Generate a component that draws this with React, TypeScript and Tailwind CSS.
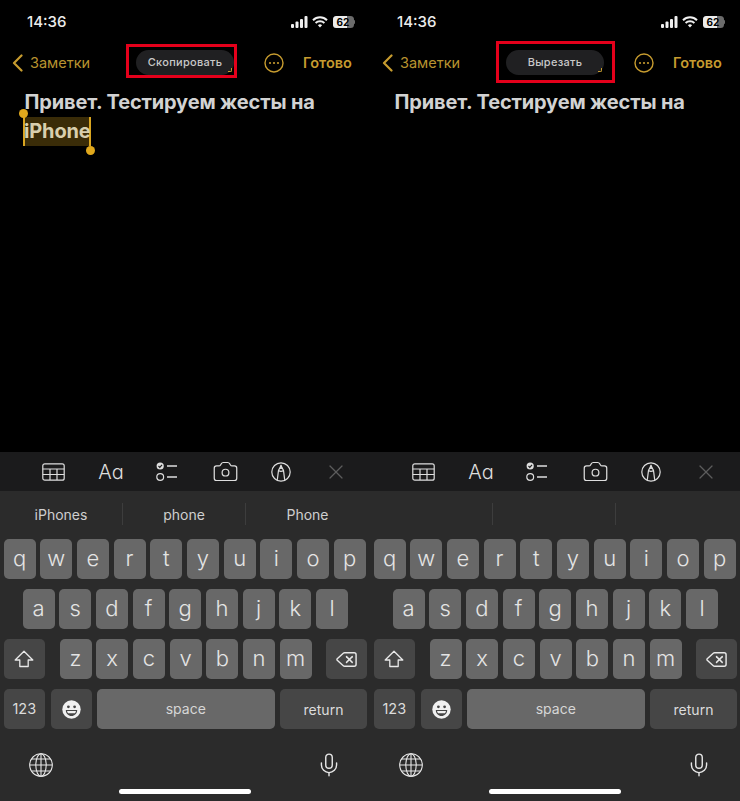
import { Camera, Delete, Mic, X } from 'lucide-react'

const font = "font-['Inter','Liberation_Sans',sans-serif]"
const gold = '#c79c2f'

function Key({ label, className = 'w-[32px]' }: { label: string; className?: string }) {
  return (
    <div className={`h-[40px] rounded-[5px] bg-[#686868] flex items-center justify-center text-[22px] leading-none font-light text-[#e4e4e4] pb-[2px] ${className}`}>
      {label}
    </div>
  )
}

function DarkKey({ children, className }: { children: React.ReactNode; className: string }) {
  return <div className={`h-[40px] rounded-[5px] bg-[#464646] flex items-center justify-center text-[#dcdcdc] ${className}`}>{children}</div>
}

function StatusIcons() {
  return (
    <div className="flex items-center gap-[4px]">
      <svg width="17" height="12" viewBox="0 0 17 12" fill="#f0f0f0">
        <rect x="0" y="8" width="3" height="4" rx="1" />
        <rect x="4.5" y="5.5" width="3" height="6.5" rx="1" />
        <rect x="9" y="3" width="3" height="9" rx="1" />
        <rect x="13.5" y="0" width="3" height="12" rx="1" />
      </svg>
      <svg width="16" height="12" viewBox="0 0 16 12" fill="none" stroke="#f0f0f0" strokeWidth="2">
        <path d="M1 4.2a10 10 0 0 1 14 0" />
        <path d="M3.6 6.9a6.4 6.4 0 0 1 8.8 0" />
        <path d="M8 11.5 5.9 9.3a3 3 0 0 1 4.2 0Z" fill="#f0f0f0" stroke="none" />
      </svg>
      <div className="flex items-center ml-[1px]">
        <div className="relative w-[21px] h-[12px] rounded-[3.5px] bg-[#6b6b6b] overflow-hidden">
          <div className="h-full w-[14px] bg-[#ececec]" />
          <span className="absolute inset-0 flex items-center justify-center text-[10px] font-bold text-black leading-none">62</span>
        </div>
        <div className="w-[1.5px] h-[4px] bg-[#6b6b6b] rounded-r" />
      </div>
    </div>
  )
}

function NavBar({ action, box }: { action: string; box: string }) {
  return (
    <div className="relative h-[38px] flex items-center shrink-0">
      <svg className="ml-[12px]" width="11" height="18" viewBox="0 0 11 18" fill="none" stroke={gold} strokeWidth="2.2" strokeLinecap="round" strokeLinejoin="round">
        <path d="M9.5 1.5 2 9l7.5 7.5" />
      </svg>
      <span className="ml-[7px] text-[14.5px] text-[#b8932f] w-[59px] whitespace-nowrap">Заметки</span>
      <div className="relative ml-[47px] mb-[2px] w-[98px] h-[25px] rounded-full bg-[#202022] flex items-center justify-center text-[11px] font-medium tracking-[0.3px] text-[#c9c9c9]">
        {action}
        <div className="absolute right-[2px] bottom-[3px] w-[4px] h-[4px] border-r border-b border-[#c79c2f] rounded-br-[2px]" />
      </div>
      <svg className="ml-[30px]" width="20" height="20" viewBox="0 0 20 20" fill="none" stroke={gold} strokeWidth="1.4">
        <circle cx="10" cy="10" r="9" />
        <circle cx="6" cy="10" r="1.1" fill={gold} stroke="none" />
        <circle cx="10" cy="10" r="1.1" fill={gold} stroke="none" />
        <circle cx="14" cy="10" r="1.1" fill={gold} stroke="none" />
      </svg>
      <span className="ml-[19px] text-[14.5px] font-semibold text-[#c79c2f]">Готово</span>
      <div className={`absolute border-[3px] border-[#e4001b] ${box}`} />
    </div>
  )
}

function Toolbar() {
  const cell = 'flex items-center justify-center'
  return (
    <div className="h-[39px] bg-[#1b1b1c] flex items-center pl-[25px] shrink-0 text-[#dedede]">
      <div className={`${cell} w-[57px]`}>
        <svg width="23" height="18" viewBox="0 0 23 18" fill="none" stroke="#dedede" strokeWidth="1.2">
          <rect x="0.8" y="0.8" width="21.4" height="16.4" rx="2" />
          <path d="M.8 6h21.4M.8 11.5h21.4M8 6v11M15 6v11" />
        </svg>
      </div>
      <div className={`${cell} w-[58px] text-[20px] leading-none font-light [font-feature-settings:'cv11']`}>Aa</div>
      <div className={`${cell} w-[54px]`}>
        <svg width="22" height="19" viewBox="0 0 22 19" fill="none" stroke="#dedede" strokeWidth="1.2">
          <circle cx="4.2" cy="4" r="3.6" fill="#dedede" stroke="none" />
          <path d="m2.5 4 1.3 1.3L6 2.8" stroke="#1b1b1c" />
          <circle cx="4.2" cy="15" r="3.4" />
          <path d="M11 4h10M11 15h10" strokeWidth="1.4" />
        </svg>
      </div>
      <div className={`${cell} w-[62px]`}>
        <Camera size={27} strokeWidth={1.1} />
      </div>
      <div className={`${cell} w-[50px]`}>
        <svg width="20" height="20" viewBox="0 0 20 20" fill="none" stroke="#dedede" strokeWidth="1.2">
          <circle cx="10" cy="10" r="9.2" />
          <path d="M6.3 17.8 7.5 8.5 10 3.5l2.5 5 1.2 9.3" />
          <path d="M7.5 8.5c1.5 1 3.5 1 5 0" />
          <path d="M10 3.5v3.5" strokeWidth="1.8" />
        </svg>
      </div>
      <div className={`${cell} w-[60px]`}>
        <X size={24} strokeWidth={1.2} className="text-[#5c5c5c]" />
      </div>
    </div>
  )
}

function Keyboard({ suggestions }: { suggestions: string[] }) {
  return (
    <div className="h-[310px] shrink-0 bg-[#2b2b2b] flex flex-col relative">
      <div className="h-[48px] flex items-center shrink-0 pb-[2px]">
        {suggestions.map((s, i) => (
          <div key={i} className={`w-[123px] h-[22px] flex items-center justify-center text-[14px] text-[#cfcfcf] ${i < 2 ? 'border-r border-[#3d3d3d]' : ''}`}>
            {s}
          </div>
        ))}
      </div>
      <div className="flex flex-col gap-[10px]">
        <div className="flex gap-[4.7px] pl-[3.5px]">
          {'qwertyuiop'.split('').map(k => <Key key={k} label={k} />)}
        </div>
        <div className="flex gap-[4.7px] pl-[22.5px]">
          {'asdfghjkl'.split('').map(k => <Key key={k} label={k} />)}
        </div>
        <div className="flex pl-[3.5px]">
          <DarkKey className="w-[41px]">
            <svg width="20" height="18" viewBox="0 0 20 18" fill="none" stroke="#e8e8e8" strokeWidth="1.3" strokeLinejoin="round">
              <path d="M10 1.2 1.2 10h4.6v6.5h8.4V10h4.6Z" />
            </svg>
          </DarkKey>
          <div className="flex gap-[4.7px] ml-[15px]">
            {'zxcvbnm'.split('').map(k => <Key key={k} label={k} />)}
          </div>
          <DarkKey className="w-[41px] ml-[14.5px]">
            <Delete size={23} strokeWidth={1.5} className="text-[#e8e8e8]" />
          </DarkKey>
        </div>
        <div className="flex gap-[5.5px] pl-[3.5px]">
          <DarkKey className="w-[41.5px] text-[14.5px]">123</DarkKey>
          <DarkKey className="w-[41px]">
            <svg width="19" height="19" viewBox="0 0 19 19">
              <circle cx="9.5" cy="9.5" r="9.2" fill="#f0f0f0" />
              <circle cx="6.4" cy="6.8" r="1.4" fill="#464646" />
              <circle cx="12.6" cy="6.8" r="1.4" fill="#464646" />
              <path d="M3.8 10h11.4c0 3.6-2.6 6-5.7 6s-5.7-2.4-5.7-6Z" fill="#464646" />
              <path d="M5 11h9c-.2 1-.5 1.6-1 2.2H6c-.5-.6-.8-1.2-1-2.2Z" fill="#f0f0f0" />
            </svg>
          </DarkKey>
          <div className="w-[177.5px] h-[40px] rounded-[5px] bg-[#686868] flex items-center justify-center text-[14px] text-[#d6d6d6] pb-[2px]">space</div>
          <DarkKey className="w-[87px] text-[14px]">return</DarkKey>
        </div>
      </div>
      <div className="flex justify-between items-center pl-[29px] pr-[28px] mt-[23px]">
        <svg width="24" height="24" viewBox="0 0 24 24" fill="none" stroke="#e8e8e8" strokeWidth="1.1">
          <circle cx="12" cy="12" r="11.3" />
          <ellipse cx="12" cy="12" rx="5.2" ry="11.3" />
          <path d="M12 .7v22.6M.7 12h22.6M2.6 6h18.8M2.6 18h18.8" />
        </svg>
        <Mic size={26} strokeWidth={1.3} className="text-[#e8e8e8]" />
      </div>
      <div className="absolute left-[119px] bottom-[7px] w-[132px] h-[5px] rounded-full bg-white" />
    </div>
  )
}

function Phone({ action, box, selected, suggestions }: { action: string; box: string; selected?: boolean; suggestions: string[] }) {
  return (
    <div className="w-[370px] h-[801px] bg-black flex flex-col">
      <div className="h-[44px] flex items-center justify-between pl-[27px] pr-[15px] shrink-0 text-[15px] font-medium text-[#ececec]">
        <span>14:36</span>
        <StatusIcons />
      </div>
      <NavBar action={action} box={box} />
      <div className="flex-1 pl-[24.5px] pt-[6px] text-[20px] font-bold leading-[29px] tracking-[-0.15px] text-[#d2d2d2]">
        <div>Привет. Тестируем жесты на</div>
        {selected && (
          <div className="relative w-[68px] bg-[#3a2c08] border-x-2 border-[#d9a520] -ml-[1.5px] text-[#d8cfae]">
            <span className="-ml-[1px]">iPhone</span>
            <div className="absolute -left-[6px] -top-[8px] w-[9px] h-[9px] rounded-full bg-[#e0a81c]" />
            <div className="absolute -right-[6px] -bottom-[9px] w-[9px] h-[9px] rounded-full bg-[#e0a81c]" />
          </div>
        )}
      </div>
      <Toolbar />
      <Keyboard suggestions={suggestions} />
    </div>
  )
}

export default function App() {
  return (
    <div className={`w-[740px] h-[801px] flex overflow-hidden ${font}`}>
      <Phone action="Скопировать" box="left-[126px] top-0 w-[111px] h-[34px]" selected suggestions={['iPhones', 'phone', 'Phone']} />
      <Phone action="Вырезать" box="left-[126px] -top-[3px] w-[119px] h-[42px]" suggestions={['', '', '']} />
    </div>
  )
}
